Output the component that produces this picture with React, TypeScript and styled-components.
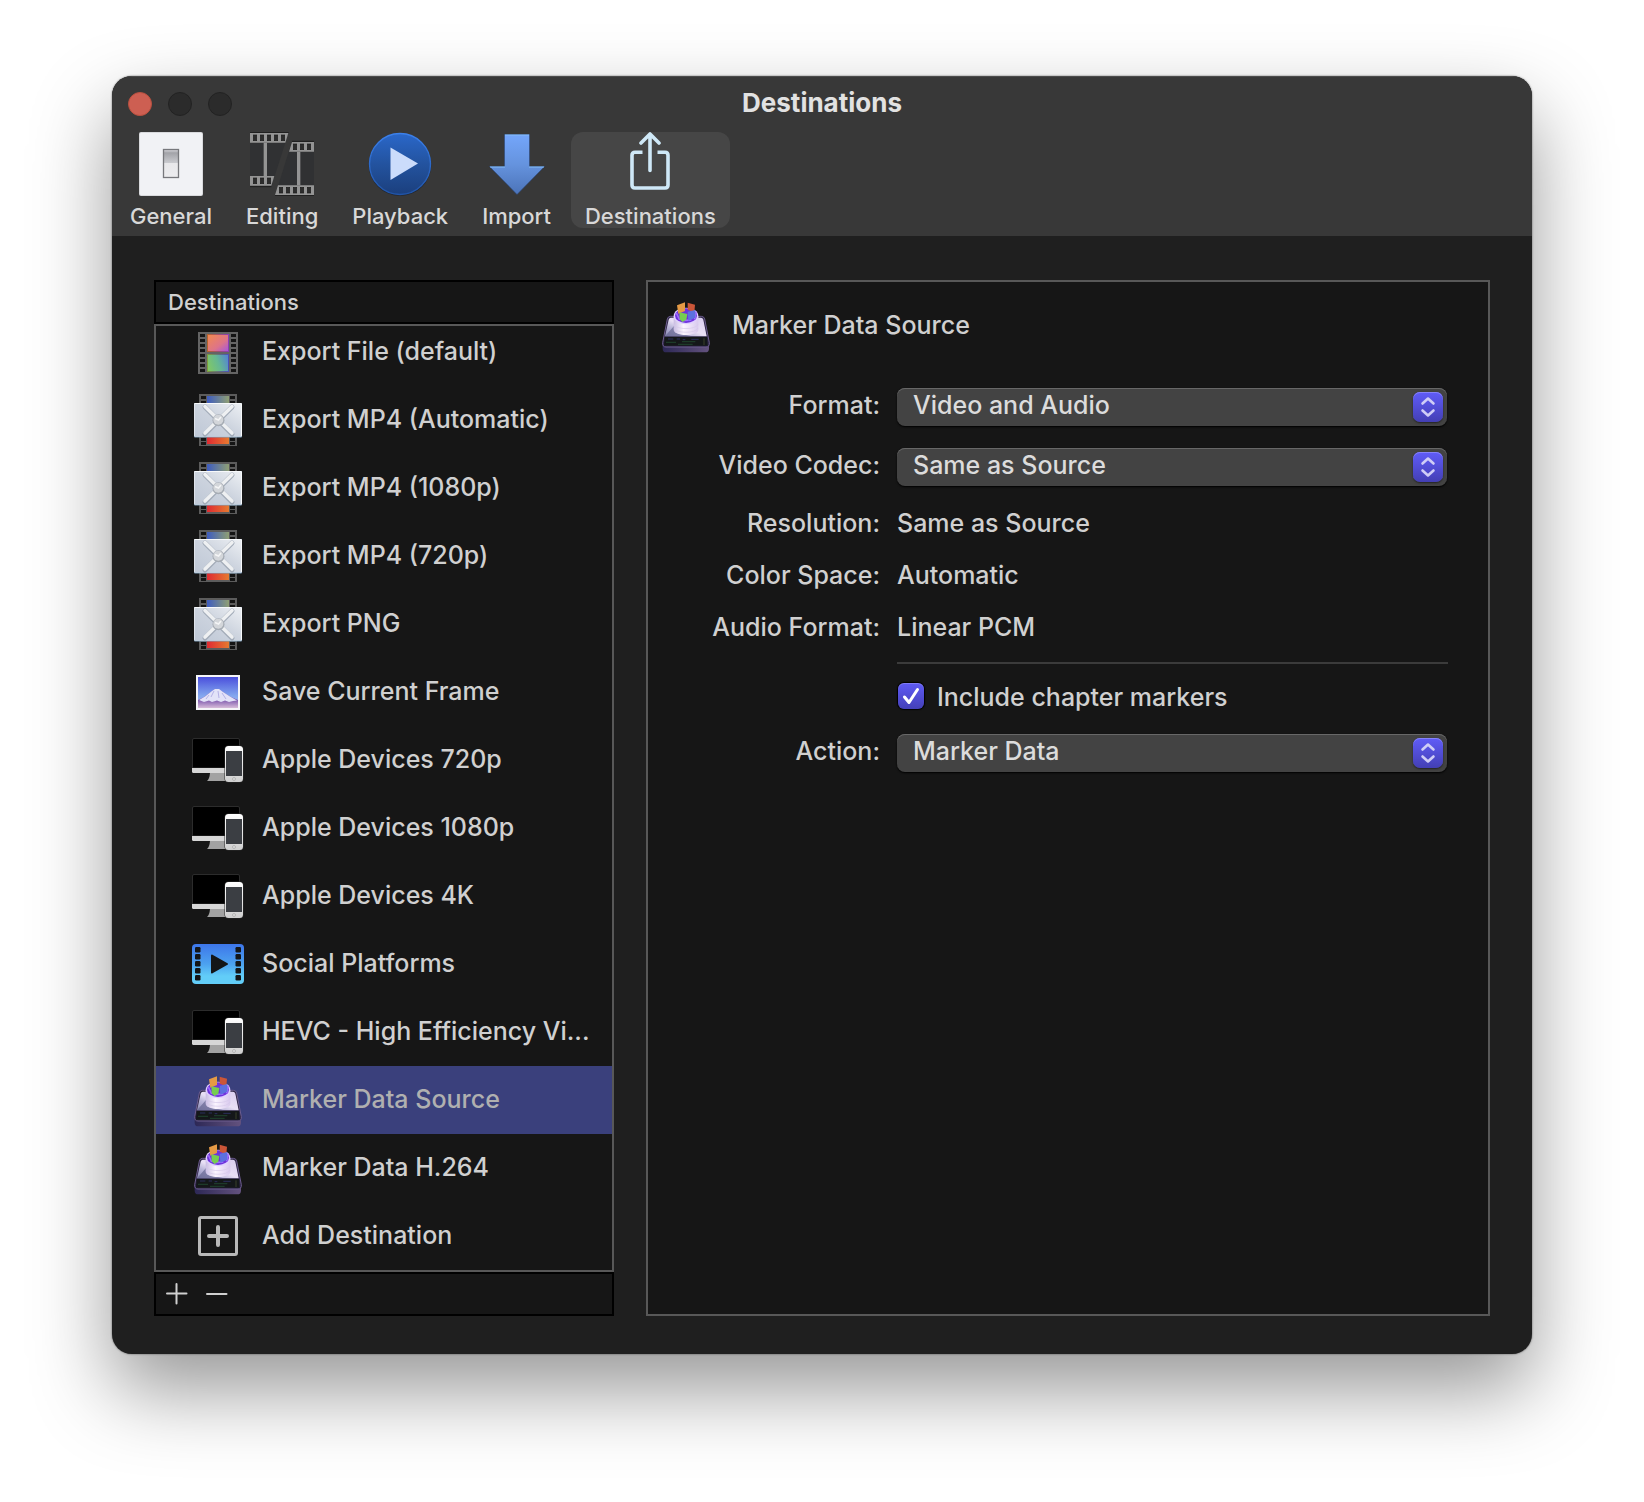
import React, { useId, useState } from "react";
import styled, { createGlobalStyle } from "styled-components";

const GlobalStyle = createGlobalStyle`
  *, *::before, *::after { box-sizing: border-box; }
  body {
    margin: 0;
    background: #fff;
    color: #d0d0d0;
    font-family: Inter, "Liberation Sans", sans-serif;
    font-size: 25px;
    font-weight: 500;
    line-height: 32px;
  }
  button, select, input { font: inherit; color: inherit; margin: 0; }
  svg { display: block; flex: none; }
`;

/* ---------- layout ---------- */

const Page = styled.div`
  padding: 76px 112px 148px;
`;

const Window = styled.main`
  border-radius: 20px;
  overflow: hidden;
  background: #1f1f1f;
  box-shadow: 0 0 2px rgba(0, 0, 0, 0.6), 0 36px 80px rgba(0, 0, 0, 0.41);
`;

const Header = styled.header`
  display: flex;
  flex-direction: column;
  height: 160px;
  background: #383838;
  box-shadow: inset 0 1px 0 #4c4c4c;
`;

const TitleBar = styled.div`
  display: grid;
  grid-template-columns: 1fr auto 1fr;
  align-items: center;
  height: 56px;
  padding: 0 16px;
`;

const Lights = styled.div`
  display: flex;
  gap: 16px;
`;

const Light = styled.button<{ $color: string; $edge: string }>`
  width: 24px;
  height: 24px;
  padding: 0;
  border: 1px solid ${(p) => p.$edge};
  border-radius: 50%;
  background: ${(p) => p.$color};
`;

const Title = styled.h1`
  margin: 0;
  padding-bottom: 2px;
  font-size: 26px;
  line-height: 32px;
  font-weight: 700;
  color: #e2e2e2;
`;

const Toolbar = styled.nav`
  display: flex;
  gap: 6px;
  padding: 0 4px;
`;

const Tab = styled.button<{ $active?: boolean }>`
  display: flex;
  flex-direction: column;
  align-items: center;
  gap: 6px;
  height: 96px;
  padding: 0 14px;
  border: 0;
  border-radius: 12px;
  background: ${(p) => (p.$active ? "#464646" : "transparent")};
  color: #d8d8d8;
  font-size: 22px;
  line-height: 28px;
`;

const Body = styled.div`
  display: flex;
  gap: 32px;
  padding: 44px 42px 38px;
`;

const Sidebar = styled.section`
  display: flex;
  flex-direction: column;
  width: 460px;
  flex: none;
`;

const ListHeader = styled.h2`
  height: 44px;
  margin: 0;
  padding: 4px 12px;
  border: 2px solid #000;
  background: #161616;
  font-size: 22px;
  line-height: 32px;
  font-weight: 500;
`;

const List = styled.ul`
  display: flex;
  flex-direction: column;
  justify-content: flex-end;
  height: 948px;
  margin: 0;
  padding: 0;
  border: 2px solid #585858;
  background: #161616;
  overflow: hidden;
  list-style: none;
`;

const Row = styled.button<{ $selected: boolean }>`
  display: flex;
  align-items: center;
  gap: 16px;
  width: 100%;
  height: 68px;
  padding: 0 12px 0 34px;
  border: 0;
  background: ${(p) => (p.$selected ? "#3a407c" : "transparent")};
  color: ${(p) => (p.$selected ? "#b0b0b0" : "#d0d0d0")};
  text-align: left;
  white-space: nowrap;
`;

const RowText = styled.span`
  padding-bottom: 2px;
`;

const ListFooter = styled.div`
  display: flex;
  align-items: center;
  gap: 18px;
  height: 44px;
  padding: 0 10px;
  border: 2px solid #000;
  background: #161616;
`;

const FooterButton = styled.button`
  padding: 0;
  border: 0;
  background: none;
`;

const Detail = styled.section`
  flex: 1;
  min-width: 0;
  padding: 16px 40px 0 10px;
  border: 2px solid #585858;
  background: #161616;
`;

const DetailTitle = styled.h2`
  display: flex;
  align-items: center;
  gap: 18px;
  margin: 0;
  font-size: 25px;
  line-height: 32px;
  font-weight: 500;
`;

const Form = styled.form`
  display: grid;
  grid-template-columns: 222px 1fr;
  column-gap: 17px;
  padding-top: 34px;
`;

const Name = styled.label`
  text-align: right;
  white-space: nowrap;
  line-height: 34px;
`;

const TextName = styled.span`
  text-align: right;
  line-height: 52px;
`;

const TextValue = styled.span`
  line-height: 52px;
`;

const Popup = styled.div`
  display: grid;
  align-items: center;
  height: 38px;
  margin: 0 1px 22px 0;
  border-radius: 8px;
  background: #434343;
  box-shadow: inset 0 1px 0 #686868, 0 1px 2px #000;
`;

const PopupSelect = styled.select`
  grid-area: 1 / 1;
  width: 100%;
  height: 38px;
  padding: 0 48px 4px 16px;
  border: 0;
  background: none;
  color: #dcdcdc;
  appearance: none;
`;

const Stepper = styled.span`
  grid-area: 1 / 1;
  justify-self: end;
  width: 30px;
  height: 30px;
  margin-right: 4px;
  border-radius: 7px;
  background: linear-gradient(#605cf8, #433fb4);
  box-shadow: inset 0 1px 0 #8582fa, 0 1px 2px rgba(0, 0, 0, 0.5);
  pointer-events: none;
`;

const Facts = styled.div`
  display: grid;
  grid-column: 1 / -1;
  grid-template-columns: subgrid;
  margin: -11px 0 9px;
`;

const Rule = styled.hr`
  grid-column: 2;
  width: 100%;
  height: 2px;
  margin: 0 0 16px;
  border: 0;
  background: #3b3b3b;
`;

const CheckLabel = styled.label`
  grid-column: 2;
  display: flex;
  align-items: center;
  gap: 12px;
  height: 32px;
  margin-bottom: 22px;
`;

const CheckText = styled.span`
  padding-top: 2px;
`;

const CheckBox = styled.span`
  display: grid;
  place-items: center;
  width: 28px;
  height: 28px;
`;

const CheckInput = styled.input`
  grid-area: 1 / 1;
  width: 26px;
  height: 26px;
  border-radius: 6px;
  background: #434343;
  box-shadow: inset 0 1px 0 rgba(255, 255, 255, 0.2), 0 0 1px 1px #000;
  appearance: none;
  &:checked { background: linear-gradient(#5f5bf6, #4440b8); }
  & + svg { grid-area: 1 / 1; pointer-events: none; }
  &:not(:checked) + svg { visibility: hidden; }
`;

/* ---------- toolbar icons ---------- */

const GeneralIcon = () => (
  <svg width="64" height="64" viewBox="0 0 64 64">
    <defs>
      <linearGradient id="switch" x1="0" y1="0" x2="0" y2="1">
        <stop offset="0" stopColor="#dcdce0" />
        <stop offset=".12" stopColor="#a2a3a8" />
        <stop offset=".47" stopColor="#c9cace" />
        <stop offset=".5" stopColor="#e8e8ea" />
        <stop offset="1" stopColor="#ececee" />
      </linearGradient>
    </defs>
    <rect width="64" height="64" rx="2" fill="#d9dadd" />
    <rect x="1" y="1" width="62" height="62" rx="1" fill="#f1f2f5" />
    <rect x="24.5" y="17.5" width="15" height="28" fill="url(#switch)" stroke="#77787c" strokeWidth="1.3" />
  </svg>
);

const holes = (xs: number[], y: number) =>
  xs.map((x) => <rect key={`${x}-${y}`} x={x} y={y} width="10" height="17" fill="#2c2c2c" stroke="#1d1d1d" strokeWidth="2" />);

const EditingIcon = () => (
  <svg width="64" height="64" viewBox="0 0 192 192">
    <path d="M0 1H116L64 164H0Z" fill="#303133" />
    <path d="M126 28H192V191H75Z" fill="#303133" />
    <path d="M0 1H116M126 28H192M0 164H64M75 191H192" stroke="#1e1e1e" strokeWidth="3" />
    <g fill="#949494">
      <path d="M0 3H115L106 32H0Z" />
      <path d="M0 132H73L64 161H0Z" />
      <path d="M41 32H51V132H41Z" />
      <path d="M126 30H192V59H117Z" />
      <path d="M84 160H192V189H75Z" />
      <path d="M141 59H151V160H141Z" />
    </g>
    {holes([10, 31, 52, 73, 94], 9)}
    {holes([10, 31, 52], 138)}
    {holes([130, 151, 172], 36)}
    {holes([88, 109, 130, 151, 172], 166)}
  </svg>
);

const PlaybackIcon = () => (
  <svg width="64" height="64" viewBox="0 0 64 64">
    <defs>
      <linearGradient id="disc" x1="0" y1="0" x2="0" y2="1">
        <stop offset="0" stopColor="#2a67c9" />
        <stop offset=".5" stopColor="#23539f" />
        <stop offset="1" stopColor="#1b3f7d" />
      </linearGradient>
      <linearGradient id="discEdge" x1="0" y1="0" x2="0" y2="1">
        <stop offset="0" stopColor="#3c80ea" />
        <stop offset="1" stopColor="#2054a8" />
      </linearGradient>
    </defs>
    <circle cx="32" cy="32.5" r="31.3" fill="#20242c" />
    <circle cx="32" cy="32" r="30.5" fill="url(#disc)" stroke="url(#discEdge)" strokeWidth="1.4" />
    <path d="M22.5 15.5L50 31.5L22.5 48Z" fill="#cbdcfb" />
  </svg>
);

const ImportIcon = () => (
  <svg width="64" height="64" viewBox="0 0 64 64">
    <defs>
      <linearGradient id="arrow" x1="0" y1="0" x2="0" y2="1">
        <stop offset="0" stopColor="#74a6fb" />
        <stop offset=".5" stopColor="#6593de" />
        <stop offset="1" stopColor="#4b73b8" />
      </linearGradient>
    </defs>
    <path d="M19.5 2.5H44.5V34.5H59.5L32 62.5L4.5 34.5H19.5Z" fill="url(#arrow)" stroke="#2c4677" strokeWidth=".6" />
    <path d="M20 3H44M5 35H20M44 35H59" stroke="#86bdf5" strokeWidth="1.2" />
  </svg>
);

const ShareIcon = () => (
  <svg width="64" height="64" viewBox="0 0 64 64" fill="none" stroke="#cfe8f7" strokeWidth="3.6" strokeLinecap="round">
    <path d="M24.5 20.2H17Q14 20.2 14 23.2V53Q14 56 17 56H47Q50 56 50 53V23.2Q50 20.2 47 20.2H39.5" strokeLinecap="butt" />
    <path d="M32 2.5V38.5M23 11L32 2L41 11" strokeLinejoin="round" />
  </svg>
);

/* ---------- destination icons ---------- */

const Sprockets = ({ x, ys }: { x: number; ys: number[] }) => (
  <g fill="#141414">
    {ys.map((y) => (
      <rect key={y} x={x} y={y} width="5" height="3" />
    ))}
  </g>
);

const FilmIcon = () => (
  <svg width="56" height="56" viewBox="0 0 56 56">
    <defs>
      <linearGradient id="warm" x1="0" y1="0" x2="1" y2="1">
        <stop offset="0" stopColor="#f28a4e" />
        <stop offset=".6" stopColor="#de7488" />
        <stop offset="1" stopColor="#a455e0" />
      </linearGradient>
      <linearGradient id="cool" x1="0" y1=".6" x2="1" y2=".3">
        <stop offset="0" stopColor="#7fc768" />
        <stop offset=".5" stopColor="#65b893" />
        <stop offset="1" stopColor="#5587cf" />
      </linearGradient>
      <linearGradient id="warmEdge">
        <stop offset="0" stopColor="#b5622c" />
        <stop offset="1" stopColor="#8a3fb4" />
      </linearGradient>
      <linearGradient id="coolEdge">
        <stop offset="0" stopColor="#7d9a3c" />
        <stop offset="1" stopColor="#4a50b8" />
      </linearGradient>
    </defs>
    <rect x="8" y="8" width="40" height="42" fill="#646464" />
    <Sprockets x={10} ys={[10, 15, 20, 25, 30, 35, 40, 45]} />
    <Sprockets x={41} ys={[10, 15, 20, 25, 30, 35, 40, 45]} />
    <rect x="17.5" y="10.5" width="21" height="17" fill="url(#warm)" stroke="url(#warmEdge)" />
    <rect x="17.5" y="30.5" width="21" height="17" fill="url(#cool)" stroke="url(#coolEdge)" />
  </svg>
);

const CompressorIcon = () => {
  const id = useId();
  return (
    <svg width="56" height="56" viewBox="0 0 56 56">
      <defs>
        <linearGradient id={`${id}t`}>
          <stop offset="0" stopColor="#3d5cc0" />
          <stop offset="1" stopColor="#8f9f74" />
        </linearGradient>
        <linearGradient id={`${id}b`}>
          <stop offset="0" stopColor="#df2a32" />
          <stop offset="1" stopColor="#e67a30" />
        </linearGradient>
        <linearGradient id={`${id}p`} x1="1" y1="0" x2="0" y2="1">
          <stop offset="0" stopColor="#eceff3" />
          <stop offset=".5" stopColor="#ccd3de" />
          <stop offset="1" stopColor="#bfc8d6" />
        </linearGradient>
      </defs>
      <rect x="9" y="2" width="38" height="52" fill="#5c5c5c" />
      <Sprockets x={11} ys={[4, 9, 46, 50]} />
      <Sprockets x={40} ys={[4, 9, 46, 50]} />
      <rect x="17" y="4" width="22" height="8" fill={`url(#${id}t)`} />
      <rect x="17" y="44" width="22" height="8" fill={`url(#${id}b)`} />
      <rect x="4" y="11" width="48" height="34.5" rx="1" fill="#7f9db8" />
      <rect x="4" y="11" width="48" height="33.5" rx="1" fill="#f7f9fb" />
      <rect x="4.5" y="12" width="46.5" height="32" fill={`url(#${id}p)`} />
      <path d="M15 15L42 42M42 15L15 42" stroke="#a3acb9" strokeWidth="5" strokeLinecap="round" />
      <path d="M15 14.5L42 41M42 14.5L15 41" stroke="#eef0f2" strokeWidth="3.6" strokeLinecap="round" />
      <circle cx="28.5" cy="28.3" r="6" fill="#a6acb4" />
      <circle cx="28.3" cy="27.8" r="5" fill="#d3d6da" />
      <path d="M25 26.5L28.5 28L31 25" stroke="#f4f5f6" strokeWidth="1.6" fill="none" />
    </svg>
  );
};

const FrameIcon = () => (
  <svg width="56" height="56" viewBox="0 0 56 56">
    <defs>
      <linearGradient id="sky" x1="0" y1="0" x2="0" y2="1">
        <stop offset="0" stopColor="#4a4fdc" />
        <stop offset=".6" stopColor="#82a6ee" />
        <stop offset="1" stopColor="#a9bdf0" />
      </linearGradient>
      <linearGradient id="land" x1="0" y1="0" x2="0" y2="1">
        <stop offset="0" stopColor="#8f7fcc" />
        <stop offset=".55" stopColor="#7a55ac" />
        <stop offset="1" stopColor="#d7bcd9" />
      </linearGradient>
    </defs>
    <rect x="6" y="11" width="44" height="35" fill="#f5f5f8" />
    <rect x="8" y="13" width="40" height="31" fill="url(#sky)" />
    <path d="M8 36L14 33L22 27L25 25L29 25L33 28L41 33L48 36V44H8Z" fill="url(#land)" />
    <path d="M9 36L15 32.5L22 27L25 25L29 25L33 28L40 32.5L47 36.5L43 37L39 38L35 36.5L31 38L27 36.5L22 38L19 36.5L14 38Z" fill="#e3e3f8" />
    <path d="M24 27L21 33M28 27L29 34M32 29L36 35M19 31L16 35" stroke="#b5b2e6" strokeWidth="1" />
  </svg>
);

const DevicesIcon = () => {
  const id = useId();
  return (
    <svg width="56" height="56" viewBox="0 0 56 56">
      <defs>
        <linearGradient id={id} x1="0" y1="0" x2="0" y2="1">
          <stop offset="0" stopColor="#ffffff" />
          <stop offset="1" stopColor="#cfcfcf" />
        </linearGradient>
      </defs>
      <path d="M2.5 36V8Q2.5 6.500 4 6.500H48Q49.5 6.500 49.5 8V36Z" fill="#000" stroke="#2c2c2c" />
      <path d="M2 36H50V39.5Q50 41 48.5 41H3.5Q2 41 2 39.5Z" fill="#d6d6d6" />
      <path d="M20 41H36V49H17Q19.5 47 20 41Z" fill="#a2a2a2" />
      <rect x="34.5" y="13.5" width="19" height="37" rx="4" fill="#2a2a2a" />
      <rect x="35" y="14" width="18" height="36" rx="3.5" fill={`url(#${id})`} />
      <rect x="36" y="19" width="16" height="25" fill="#3b3e43" />
      <circle cx="44" cy="47" r="1.5" fill="#dcdcdc" stroke="#a0a0a0" strokeWidth=".6" />
    </svg>
  );
};

const SocialIcon = () => (
  <svg width="56" height="56" viewBox="0 0 56 56">
    <defs>
      <linearGradient id="social" x1="0" y1="0" x2="0" y2="1">
        <stop offset="0" stopColor="#3d76ea" />
        <stop offset=".5" stopColor="#4ca2f0" />
        <stop offset=".8" stopColor="#62cdf8" />
        <stop offset="1" stopColor="#62cdf8" />
      </linearGradient>
    </defs>
    <rect x="2" y="8" width="52" height="40" rx="4" fill="url(#social)" />
    {[11, 18, 25, 32, 39].map((y) => (
      <g key={y} fill="#141618">
        <rect x="5" y={y} width="5.5" height="5.5" rx="1.2" />
        <rect x="45.5" y={y} width="5.5" height="5.5" rx="1.2" />
      </g>
    ))}
    <path d="M22 19.5L37 28L22 36.5Z" fill="#141618" stroke="#141618" strokeWidth="2" strokeLinejoin="round" />
  </svg>
);

const MarkerIcon = () => {
  const id = useId();
  return (
    <svg width="56" height="56" viewBox="-12 -12 168 168">
      <defs>
        <linearGradient id={`${id}b`}>
          <stop offset="0" stopColor="#2d2856" />
          <stop offset="1" stopColor="#63527e" />
        </linearGradient>
        <linearGradient id={`${id}s`} x1="0" y1="1" x2="1" y2="0">
          <stop offset="0" stopColor="#8988b2" />
          <stop offset=".3" stopColor="#b9b5d8" />
          <stop offset=".5" stopColor="#e9e0f5" />
          <stop offset="1" stopColor="#d9ccee" />
        </linearGradient>
        <linearGradient id={`${id}c`}>
          <stop offset="0" stopColor="#c9bde2" />
          <stop offset=".4" stopColor="#fbf5ff" />
          <stop offset="1" stopColor="#d9c9ee" />
        </linearGradient>
      </defs>
      <path d="M2 122V140Q2 151 13 151H130Q141 151 141 140V122Z" fill={`url(#${id}b)`} />
      <path d="M25 43H118Q126 43 128 51L142 122Q143 135 132 135H12Q1 135 2 122L16 51Q18 43 25 43Z" fill="#2b2443" stroke="#6c5c8e" strokeWidth="3" />
      <path d="M26 47H117Q122 47 124 53L134 103H9L20 53Q22 47 26 47Z" fill={`url(#${id}s)`} />
      <path d="M9 103L36 72L40 92L90 103Z" fill="#62638e" opacity=".65" />
      <path d="M8 105H135L137 131H6Z" fill="#141719" />
      <path d="M12 121H42M60 119H100M48 127H92" stroke="#1d3a29" strokeWidth="4" />
      <path d="M18 111H34M44 111H54M62 113H70M88 112H110" stroke="#2b2e5c" strokeWidth="3" />
      <path d="M126 109V129" stroke="#4b5535" strokeWidth="2" />
      <path d="M35 42V84C38 104 106 104 109 84V42Z" fill={`url(#${id}c)`} />
      <path d="M36 67C42 84 102 84 108 67M36 78C42 95 102 95 108 78" fill="none" stroke="#d5c8e8" strokeWidth="2" />
      <ellipse cx="72" cy="42" rx="37" ry="25" fill="#e0d0ff" />
      <ellipse cx="72" cy="41" rx="33" ry="22" fill="#6d32dc" />
      <path d="M43 33L53 54M102 29L98 52M60 56L88 54" stroke="#a06bff" strokeWidth="5" />
      <path d="M45 10L69 1V27L49 35Z" fill="#e59a45" />
      <path d="M77 2L99 8L97 31L77 23Z" fill="#cb5638" />
      <path d="M77 29L100 24V47L79 56Z" fill="#5c70df" />
      <path d="M52 31L76 36L73 53L61 60L53 52Z" fill="#76cd51" />
    </svg>
  );
};

const AddIcon = () => (
  <svg width="56" height="56" viewBox="0 0 56 56" fill="none" stroke="#b9b9b9">
    <rect x="9.5" y="9.5" width="37" height="37" rx="1.5" strokeWidth="3" />
    <path d="M28 19V37M19 28H37" strokeWidth="4" strokeLinecap="round" />
  </svg>
);

/* ---------- data ---------- */

const tabs = [
  { name: "General", Icon: GeneralIcon },
  { name: "Editing", Icon: EditingIcon },
  { name: "Playback", Icon: PlaybackIcon },
  { name: "Import", Icon: ImportIcon },
  { name: "Destinations", Icon: ShareIcon },
];

const destinations = [
  { name: "Export File (default)", Icon: FilmIcon },
  { name: "Export MP4 (Automatic)", Icon: CompressorIcon },
  { name: "Export MP4 (1080p)", Icon: CompressorIcon },
  { name: "Export MP4 (720p)", Icon: CompressorIcon },
  { name: "Export PNG", Icon: CompressorIcon },
  { name: "Save Current Frame", Icon: FrameIcon },
  { name: "Apple Devices 720p", Icon: DevicesIcon },
  { name: "Apple Devices 1080p", Icon: DevicesIcon },
  { name: "Apple Devices 4K", Icon: DevicesIcon },
  { name: "Social Platforms", Icon: SocialIcon },
  { name: "HEVC - High Efficiency Vi...", Icon: DevicesIcon },
  { name: "Marker Data Source", Icon: MarkerIcon },
  { name: "Marker Data H.264", Icon: MarkerIcon },
  { name: "Add Destination", Icon: AddIcon },
];

const facts = [
  ["Resolution:", "Same as Source"],
  ["Color Space:", "Automatic"],
  ["Audio Format:", "Linear PCM"],
];

const PopupField = ({ label, value }: { label: string; value: string }) => {
  const id = useId();
  return (
    <>
      <Name htmlFor={id}>{label}</Name>
      <Popup>
        <PopupSelect id={id} defaultValue={value}>
          <option>{value}</option>
        </PopupSelect>
        <Stepper>
          <svg width="30" height="30" viewBox="0 0 30 30" fill="none" stroke="#cfcdf6" strokeWidth="2.6" strokeLinecap="round" strokeLinejoin="round">
            <path d="M9.5 11.5L15 6.500L20.5 11.5M9.5 18.500L15 23.500L20.5 18.500" />
          </svg>
        </Stepper>
      </Popup>
    </>
  );
};

export default function App() {
  const [selected, setSelected] = useState(11);
  return (
    <Page>
      <GlobalStyle />
      <Window>
        <Header>
          <TitleBar>
            <Lights>
              <Light $color="#cd5f52" $edge="#b9503f" aria-label="Close" />
              <Light $color="#2b2b2b" $edge="#232323" aria-label="Minimize" />
              <Light $color="#2b2b2b" $edge="#232323" aria-label="Zoom" />
            </Lights>
            <Title>Destinations</Title>
          </TitleBar>
          <Toolbar>
            {tabs.map(({ name, Icon }) => (
              <Tab key={name} $active={name === "Destinations"}>
                <Icon />
                {name}
              </Tab>
            ))}
          </Toolbar>
        </Header>
        <Body>
          <Sidebar>
            <ListHeader>Destinations</ListHeader>
            <List>
              {destinations.map(({ name, Icon }, i) => (
                <li key={name}>
                  <Row $selected={i === selected} onClick={() => setSelected(i)}>
                    <Icon />
                    <RowText>{name}</RowText>
                  </Row>
                </li>
              ))}
            </List>
            <ListFooter>
              <FooterButton aria-label="Add">
                <svg width="22" height="22" viewBox="0 0 22 22" stroke="currentColor" strokeWidth="2" strokeLinecap="round">
                  <path d="M10.5 1V20.500M1 10.500H20.500" />
                </svg>
              </FooterButton>
              <FooterButton aria-label="Remove">
                <svg width="22" height="22" viewBox="0 0 22 22" stroke="currentColor" strokeWidth="2" strokeLinecap="round">
                  <path d="M1 11H20.500" />
                </svg>
              </FooterButton>
            </ListFooter>
          </Sidebar>
          <Detail>
            <DetailTitle>
              <MarkerIcon />
              <RowText>Marker Data Source</RowText>
            </DetailTitle>
            <Form>
              <PopupField label="Format:" value="Video and Audio" />
              <PopupField label="Video Codec:" value="Same as Source" />
              <Facts>
                {facts.map(([k, v]) => (
                  <React.Fragment key={k}>
                    <TextName>{k}</TextName>
                    <TextValue>{v}</TextValue>
                  </React.Fragment>
                ))}
              </Facts>
              <Rule />
              <CheckLabel>
                <CheckBox>
                  <CheckInput type="checkbox" defaultChecked />
                  <svg width="26" height="26" viewBox="0 0 26 26" fill="none" stroke="#fff" strokeWidth="3" strokeLinecap="round" strokeLinejoin="round">
                    <path d="M6.500 14L11 19.500L19.500 6.500" />
                  </svg>
                </CheckBox>
                <CheckText>Include chapter markers</CheckText>
              </CheckLabel>
              <PopupField label="Action:" value="Marker Data" />
            </Form>
          </Detail>
        </Body>
      </Window>
    </Page>
  );
}
